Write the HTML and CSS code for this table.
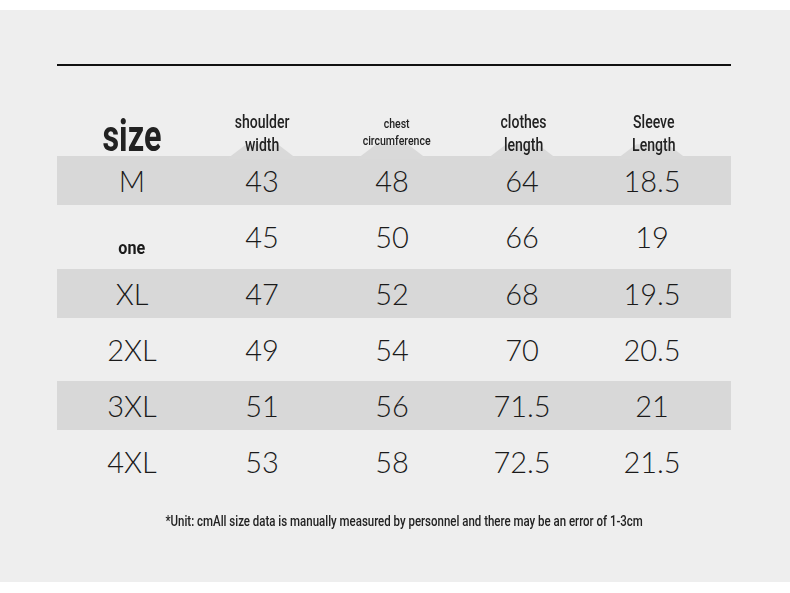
FILE: index.html
```html
<!DOCTYPE html>
<html>
<head>
<meta charset="utf-8">
<link rel="stylesheet" href="styles.css">
</head>
<body>
<div class="panel">
  <div class="rule"></div>
  <div class="table">
    <div class="row head">
      <div class="cell size"><span class="nx">size</span></div>
      <div class="cell hl"><span class="tab"></span><span class="nx">shoulder<br>width</span></div>
      <div class="cell hl small"><span class="tab"></span><span class="nx">chest<br>circumference</span></div>
      <div class="cell hl shift"><span class="tab"></span><span class="nx">clothes<br>length</span></div>
      <div class="cell hl shift"><span class="tab"></span><span class="nx">Sleeve<br>Length</span></div>
    </div>
    <div class="row shade"><div class="cell">M</div><div class="cell">43</div><div class="cell">48</div><div class="cell">64</div><div class="cell">18.5</div></div>
    <div class="row"><div class="cell one"><span class="tab"></span><span class="nx">one</span></div><div class="cell">45</div><div class="cell">50</div><div class="cell">66</div><div class="cell">19</div></div>
    <div class="row shade"><div class="cell">XL</div><div class="cell">47</div><div class="cell">52</div><div class="cell">68</div><div class="cell">19.5</div></div>
    <div class="row"><div class="cell">2XL</div><div class="cell">49</div><div class="cell">54</div><div class="cell">70</div><div class="cell">20.5</div></div>
    <div class="row shade"><div class="cell">3XL</div><div class="cell">51</div><div class="cell">56</div><div class="cell">71.5</div><div class="cell">21</div></div>
    <div class="row"><div class="cell">4XL</div><div class="cell">53</div><div class="cell">58</div><div class="cell">72.5</div><div class="cell">21.5</div></div>
  </div>
  <p class="note"><span class="nx">*Unit: cmAll size data is manually measured by personnel and there may be an error of 1-3cm</span></p>
</div>
</body>
</html>
```
FILE: styles.css
```css
html, body { margin: 0; padding: 0; background: #ffffff; }
body { width: 790px; height: 593px; padding-top: 10px; box-sizing: border-box; }
.panel {
  background: #eeeeee;
  height: 572px;
  padding: 54px 59px 0 57px;
  box-sizing: border-box;
}
.rule { height: 2px; background: #111; margin-bottom: 43px; }
.table { display: flex; flex-direction: column; }
.row {
  display: grid;
  grid-template-columns: repeat(5, 130px);
  padding-left: 10px;
  height: 49px;
  margin-bottom: 7.3px;
  align-items: center;
  font-family: Lato, "Open Sans", sans-serif;
  font-weight: 300;
  font-size: 29px;
  color: #1a1a1a;
}
.row.shade { background: #d8d8d8; }
.cell { text-align: center; position: relative; }
.nx { display: inline-block; transform: scaleX(0.78); font-family: Roboto, "Liberation Sans", sans-serif; }
.head {
  height: 47px;
  margin-bottom: 0;
  align-items: end;
  color: #222;
}
.head .size { font-size: 45px; line-height: 42px; margin-bottom: -1px; font-weight: 700; }
.head .size .nx { transform: scaleX(0.72); }
.head .hl { font-size: 18px; line-height: 23px; font-weight: 500; }
.head .hl.small { font-size: 12px; line-height: 17px; margin-bottom: 6px; padding-left: 9px; }
.head .hl.small .nx { transform: scaleX(0.88); }
.head .hl.shift { padding-left: 4px; }
.tab {
  position: absolute;
  left: 50%;
  bottom: -3px;
  width: 70px;
  height: 15px;
  margin-left: -35px;
  background: #d9d9d9;
  clip-path: polygon(28% 0, 72% 0, 100% 100%, 0 100%);
  filter: blur(1.2px);
  z-index: -1;
}
.small .tab { bottom: -9px; }
.hl { z-index: 0; }
.one {
  align-self: end;
  font-weight: 700;
  font-size: 19px;
  line-height: 20px;
  margin-bottom: 3px;
}
.one .nx { transform: scaleX(0.85); }
.one .tab { bottom: -10px; width: 50px; margin-left: -25px; height: 10px; }
.note {
  margin: 19px 0 0;
  padding-left: 20px;
  text-align: center;
  font-size: 14px;
  font-weight: 500;
  color: #222;
}
.note .nx { transform: scaleX(0.82); white-space: nowrap; }
```
